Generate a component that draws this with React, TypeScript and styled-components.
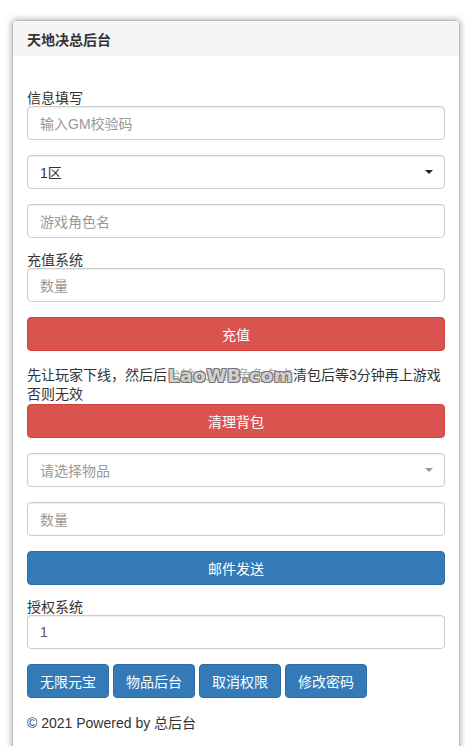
import React from "react";
import styled, { createGlobalStyle } from "styled-components";

const Global = createGlobalStyle`
  html, body { margin: 0; padding: 0; background: #fff; }
  body {
    font-family: "Liberation Sans", "Noto Sans CJK SC", sans-serif;
    font-size: 14px;
    color: #333;
  }
  * { box-sizing: border-box; }
`;

const Card = styled.div`
  margin: 20px 5px 0 12px;
  width: 448px;
  border: 1px solid #bdbdbd;
  border-radius: 4px;
  box-shadow: 0 0 7px rgba(0, 0, 0, 0.35);
  background: #fff;
  min-height: 740px;
`;

const Header = styled.div`
  height: 35px;
  padding: 0 14px;
  display: flex;
  align-items: center;
  background: #f5f5f5;
  font-weight: bold;
  font-size: 14px;
  color: #333;
  border-radius: 3px 3px 0 0;
`;

const Body = styled.div`
  padding: 35px 14px 15px 14px;
  display: flex;
  flex-direction: column;
`;

const Label = styled.div`
  line-height: 15px;
  font-size: 14px;
  color: #333;
`;

const Group = styled.div<{ $mb?: number }>`
  display: flex;
  flex-direction: column;
  margin-bottom: ${(p) => (p.$mb ?? 15)}px;
`;

const Input = styled.div<{ $placeholder?: boolean }>`
  height: 34px;
  border: 1px solid #ccc;
  border-radius: 4px;
  padding: 0 12px;
  display: flex;
  align-items: center;
  font-size: 14px;
  color: ${(p) => (p.$placeholder ? "#999" : "#555")};
  box-shadow: inset 0 1px 1px rgba(0, 0, 0, 0.075);
  background: #fff;
`;

const Select = styled(Input)<{ $muted?: boolean }>`
  justify-content: space-between;
  color: ${(p) => (p.$muted ? "#999" : "#333")};
  padding-right: 11px;
`;

const Caret = styled.span<{ $muted?: boolean }>`
  width: 0;
  height: 0;
  border-left: 4px solid transparent;
  border-right: 4px solid transparent;
  border-top: 4px solid ${(p) => (p.$muted ? "#999" : "#222")};
`;

const Button = styled.div<{ $variant: "danger" | "primary" }>`
  height: 34px;
  display: flex;
  align-items: center;
  justify-content: center;
  border-radius: 4px;
  color: #fff;
  font-size: 14px;
  background: ${(p) => (p.$variant === "danger" ? "#d9534f" : "#337ab7")};
  border: 1px solid ${(p) => (p.$variant === "danger" ? "#d43f3a" : "#2e6da4")};
`;

const Note = styled.div`
  position: relative;
  line-height: 19px;
  font-size: 14px;
  color: #333;
`;

const Watermark = styled.span`
  position: absolute;
  left: 141px;
  top: 0px;
  font-family: "DejaVu Sans", sans-serif;
  font-weight: bold;
  font-size: 18px;
  letter-spacing: 0.8px;
  color: #d0d0d0;
  background: rgba(255, 255, 255, 0.6);
  line-height: 19px;
  text-shadow: -1px -1px 0 #777, 1px -1px 0 #777, -1px 1px 0 #777, 1px 1px 0 #777;
`;

const ButtonRow = styled.div`
  display: flex;
  gap: 4px;
  margin-bottom: 15px;
`;

const SmallButton = styled.div`
  height: 34px;
  padding: 0 12px;
  display: flex;
  align-items: center;
  border-radius: 4px;
  background: #337ab7;
  border: 1px solid #2e6da4;
  color: #fff;
  font-size: 14px;
`;

const Footer = styled.div`
  line-height: 20px;
  font-size: 14px;
  color: #333;
`;

export default function App() {
  return (
    <>
      <Global />
      <Card>
        <Header>天地决总后台</Header>
        <Body>
          <Group>
            <Label>信息填写</Label>
            <Input $placeholder>输入GM校验码</Input>
          </Group>
          <Group>
            <Select>
              <span>1区</span>
              <Caret />
            </Select>
          </Group>
          <Group>
            <Input $placeholder>游戏角色名</Input>
          </Group>
          <Group>
            <Label>充值系统</Label>
            <Input $placeholder>数量</Input>
          </Group>
          <Group>
            <Button $variant="danger">充值</Button>
          </Group>
          <Group>
            <Note>
              先让玩家下线，然后后台输入玩家角色名点清包后等3分钟再上游戏否则无效
              <Watermark>LaoWB.com</Watermark>
            </Note>
            <Button $variant="danger">清理背包</Button>
          </Group>
          <Group>
            <Select $muted>
              <span>请选择物品</span>
              <Caret $muted />
            </Select>
          </Group>
          <Group>
            <Input $placeholder>数量</Input>
          </Group>
          <Group>
            <Button $variant="primary">邮件发送</Button>
          </Group>
          <Group>
            <Label>授权系统</Label>
            <Input>1</Input>
          </Group>
          <ButtonRow>
            <SmallButton>无限元宝</SmallButton>
            <SmallButton>物品后台</SmallButton>
            <SmallButton>取消权限</SmallButton>
            <SmallButton>修改密码</SmallButton>
          </ButtonRow>
          <Footer>© 2021 Powered by 总后台</Footer>
        </Body>
      </Card>
    </>
  );
}
